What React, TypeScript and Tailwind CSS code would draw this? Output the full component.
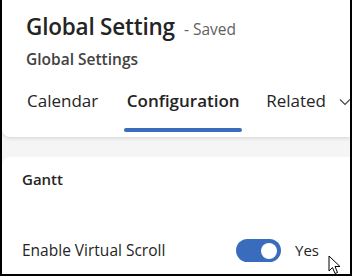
import React from "react";

export default function App() {
  return (
    <div
      className="w-[352px] h-[276px] overflow-hidden bg-[#f5f5f5] border-l-2 border-r-2 border-b-2 border-black flex flex-col relative"
      style={{ fontFamily: '"Open Sans", "Noto Sans", sans-serif' }}
    >
      <div className="bg-white rounded-bl-[8px] h-[137px] shrink-0 shadow-[0_1px_4px_rgba(0,0,0,0.14)] pl-[24px] pt-[11px] flex flex-col">
        <div className="flex items-baseline whitespace-nowrap leading-[32px]">
          <span className="text-[22.5px] font-semibold text-[#242424] tracking-[-0.2px]">Global Setting</span>
          <span className="text-[15.5px] text-[#616161] ml-[9px]">- Saved</span>
        </div>
        <div className="text-[15.5px] font-semibold text-[#424242] mt-[3px] leading-[22px]">Global Settings</div>
        <div className="flex items-start mt-[19px] whitespace-nowrap">
          <div className="text-[17px] text-[#242424] leading-[24px] pl-[1px]">Calendar</div>
          <div className="ml-[26px] flex flex-col items-center">
            <div className="text-[17px] font-semibold text-[#242424] leading-[24px]">Configuration</div>
            <div className="mt-[15px] h-[4px] w-[118px] rounded-full bg-[#3a6cbe]"></div>
          </div>
          <div className="ml-[24px] flex items-center text-[17px] text-[#242424] leading-[24px]">
            Related
            <svg width="14" height="14" viewBox="0 0 14 14" className="ml-[12px] mt-[2px]">
              <path d="M2 4.5 L7 9.5 L12 4.5" fill="none" stroke="#424242" strokeWidth="1.1" />
            </svg>
          </div>
        </div>
      </div>
      <div className="mt-[20px] bg-white rounded-tl-[8px] flex-1 pl-[20px] pt-[12px]">
        <div className="text-[15px] font-semibold text-[#242424] leading-[20px]">Gantt</div>
        <div className="flex items-center mt-[50px]">
          <div className="text-[15.5px] text-[#242424] w-[214px] leading-[23px]">Enable Virtual Scroll</div>
          <div className="w-[45px] h-[23px] rounded-full bg-[#3a6cbe] flex items-center justify-end pr-[4px]">
            <div className="w-[16px] h-[16px] rounded-full bg-white"></div>
          </div>
          <div className="ml-[14px] text-[15px] text-[#242424] leading-[23px]">Yes</div>
        </div>
      </div>
      <svg className="absolute left-[326px] top-[255px]" width="14" height="20" viewBox="0 0 14 20">
        <path d="M1 1 L1 16 L4.5 12.5 L7 18.5 L9.5 17.5 L7 11.5 L12 11.5 Z" fill="white" stroke="black" strokeWidth="1" strokeLinejoin="miter" />
      </svg>
    </div>
  );
}
